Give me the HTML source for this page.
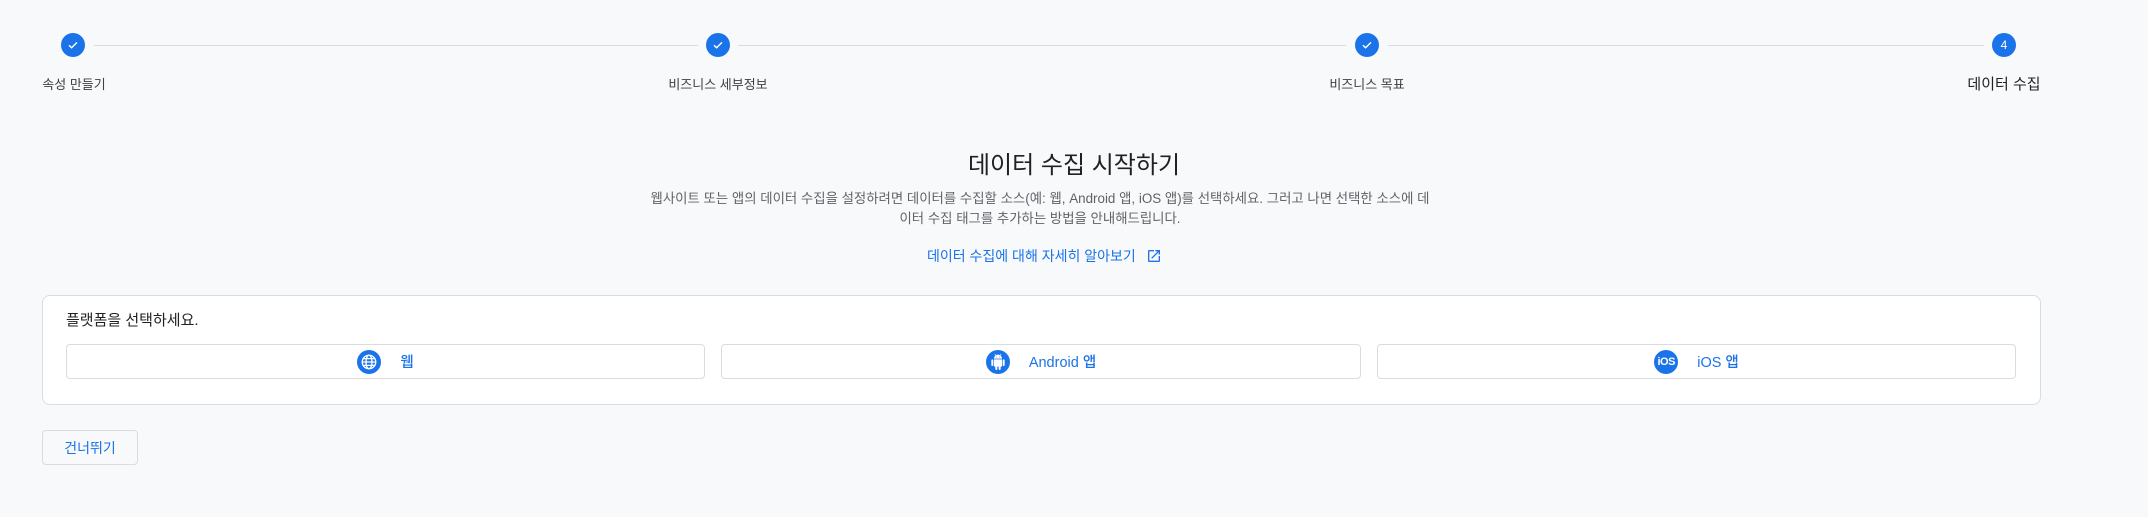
<!DOCTYPE html>
<html><head><meta charset="utf-8"><style>
*{box-sizing:border-box;margin:0;padding:0}
body{width:2148px;height:517px;background:#f8f9fa;font-family:"Liberation Sans","Noto Sans CJK KR",sans-serif;position:relative;overflow:hidden;color:#202124}
.abs{position:absolute}
.circ{position:absolute;width:24px;height:24px;border-radius:50%;background:#1a73e8;top:33px;color:#fff;font-size:12px;display:flex;align-items:center;justify-content:center}
.line{position:absolute;top:45px;height:1px;background:#dadce0}
.lbl{position:absolute;top:74px;font-size:13px;color:#3c4043;transform:translateX(-50%);white-space:nowrap}
.btn{position:absolute;top:344px;height:35px;border:1px solid #dadce0;border-radius:4px;background:#fff;display:flex;align-items:center;justify-content:center;gap:19px;color:#1a73e8;font-size:14.5px;font-weight:500}
.ic{width:24px;height:24px;border-radius:50%;background:#1a73e8;display:flex;align-items:center;justify-content:center;color:#fff}
</style></head><body>
<div class="circ" style="left:61px"><svg width="14" height="14" viewBox="0 0 14 14"><path d="M3 7.2l2.6 2.6L11 4.4" stroke="#fff" stroke-width="1.4" fill="none"/></svg></div>
<div class="circ" style="left:706px"><svg width="14" height="14" viewBox="0 0 14 14"><path d="M3 7.2l2.6 2.6L11 4.4" stroke="#fff" stroke-width="1.4" fill="none"/></svg></div>
<div class="circ" style="left:1355px"><svg width="14" height="14" viewBox="0 0 14 14"><path d="M3 7.2l2.6 2.6L11 4.4" stroke="#fff" stroke-width="1.4" fill="none"/></svg></div>
<div class="circ" style="left:1992px">4</div>
<div class="line" style="left:94px;width:604px"></div>
<div class="line" style="left:738px;width:608px"></div>
<div class="line" style="left:1388px;width:596px"></div>
<div class="lbl" style="left:74px">속성 만들기</div>
<div class="lbl" style="left:718px">비즈니스 세부정보</div>
<div class="lbl" style="left:1367px">비즈니스 목표</div>
<div class="lbl" style="left:2004px;font-size:15px;color:#202124;top:73px">데이터 수집</div>
<div class="abs" style="left:0;width:2148px;top:145px;text-align:center;font-size:24px;color:#202124">데이터 수집 시작하기</div>
<div class="abs" style="left:600px;width:880px;top:189px;text-align:center;font-size:13.4px;line-height:20px;color:#5f6368">웹사이트 또는 앱의 데이터 수집을 설정하려면 데이터를 수집할 소스(예: 웹, Android 앱, iOS 앱)를 선택하세요. 그러고 나면 선택한 소스에 데<br>이터 수집 태그를 추가하는 방법을 안내해드립니다.</div>
<div class="abs" style="left:927px;top:246px;font-size:14px;color:#1a73e8;display:flex;align-items:center;gap:10px">데이터 수집에 대해 자세히 알아보기 <svg width="16" height="16" viewBox="0 0 24 24"><path d="M19 19H5V5h7V3H5a2 2 0 00-2 2v14a2 2 0 002 2h14a2 2 0 002-2v-7h-2v7zM14 3v2h3.6l-9.8 9.8 1.4 1.4L19 6.4V10h2V3h-7z" fill="#1a73e8"/></svg></div>
<div class="abs" style="left:42px;top:295px;width:1999px;height:110px;background:#fff;border:1px solid #dadce0;border-radius:8px"></div>
<div class="abs" style="left:66px;top:309px;font-size:15px;color:#202124">플랫폼을 선택하세요.</div>
<div class="btn" style="left:66px;width:639px"><div class="ic"><svg width="18" height="18" viewBox="0 0 24 24" fill="none" stroke="#fff" stroke-width="1.8"><circle cx="12" cy="12" r="9"/><ellipse cx="12" cy="12" rx="4" ry="9"/><path d="M3 12h18M4.5 7.5h15M4.5 16.5h15"/></svg></div><span>웹</span></div>
<div class="btn" style="left:721px;width:640px"><div class="ic"><svg width="16" height="16" viewBox="0 0 24 24" fill="#fff"><path d="M6 18c0 .55.45 1 1 1h1v3.5c0 .83.67 1.5 1.5 1.5s1.5-.67 1.5-1.5V19h2v3.5c0 .83.67 1.5 1.5 1.5s1.5-.67 1.5-1.5V19h1c.55 0 1-.45 1-1V8H6v10zM3.5 8C2.67 8 2 8.67 2 9.5v7c0 .83.67 1.5 1.5 1.5S5 17.33 5 16.5v-7C5 8.67 4.33 8 3.5 8zm17 0c-.83 0-1.5.67-1.5 1.5v7c0 .83.67 1.5 1.5 1.5s1.5-.67 1.5-1.5v-7c0-.83-.67-1.5-1.5-1.5zm-4.97-5.84l1.3-1.3c.2-.2.2-.51 0-.71-.2-.2-.51-.2-.71 0l-1.48 1.48A5.84 5.84 0 0012 1c-.96 0-1.86.23-2.66.63L7.85.15c-.2-.2-.51-.2-.71 0-.2.2-.2.51 0 .71l1.31 1.31A5.98 5.98 0 006 7h12c0-1.99-.97-3.75-2.47-4.84zM10 5H9V4h1v1zm5 0h-1V4h1v1z"/></svg></div><span>Android 앱</span></div>
<div class="btn" style="left:1377px;width:639px"><div class="ic" style="font-size:11px;font-weight:700;letter-spacing:-0.5px">iOS</div><span>iOS 앱</span></div>
<div class="abs" style="left:42px;top:430px;width:96px;height:35px;border:1px solid #dadce0;border-radius:4px;background:#f8f9fa;display:flex;align-items:center;justify-content:center;color:#1a73e8;font-size:14px">건너뛰기</div>
</body></html>
